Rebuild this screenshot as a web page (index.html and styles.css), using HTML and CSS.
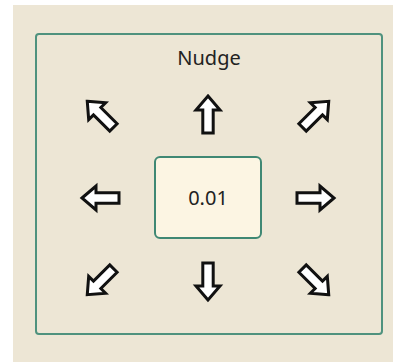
FILE: index.html
```html
<!DOCTYPE html>
<html lang="en">
<head>
  <meta charset="UTF-8" />
  <meta name="viewport" content="width=device-width, initial-scale=1.0" />
  <title>Nudge</title>
  <link rel="stylesheet" href="styles.css">
</head>
<body>
  <div class="panel">
    <div class="group">
      <div class="group-title">Nudge</div>
      <div class="pad">
        <button class="arrow rot-315" title="Up left"><svg viewBox="0 0 28 42"><polygon points="14,3 26,17 19.2,17 19.2,40 8.8,40 8.8,17 2,17"/></svg></button>
        <button class="arrow" title="Up"><svg viewBox="0 0 28 42"><polygon points="14,3 26,17 19.2,17 19.2,40 8.8,40 8.8,17 2,17"/></svg></button>
        <button class="arrow rot-45" title="Up right"><svg viewBox="0 0 28 42"><polygon points="14,3 26,17 19.2,17 19.2,40 8.8,40 8.8,17 2,17"/></svg></button>

        <button class="arrow rot-270" title="Left"><svg viewBox="0 0 28 42"><polygon points="14,3 26,17 19.2,17 19.2,40 8.8,40 8.8,17 2,17"/></svg></button>
        <div class="step">0.01</div>
        <button class="arrow rot-90" title="Right"><svg viewBox="0 0 28 42"><polygon points="14,3 26,17 19.2,17 19.2,40 8.8,40 8.8,17 2,17"/></svg></button>

        <button class="arrow rot-225" title="Down left"><svg viewBox="0 0 28 42"><polygon points="14,3 26,17 19.2,17 19.2,40 8.8,40 8.8,17 2,17"/></svg></button>
        <button class="arrow rot-180" title="Down"><svg viewBox="0 0 28 42"><polygon points="14,3 26,17 19.2,17 19.2,40 8.8,40 8.8,17 2,17"/></svg></button>
        <button class="arrow rot-135" title="Down right"><svg viewBox="0 0 28 42"><polygon points="14,3 26,17 19.2,17 19.2,40 8.8,40 8.8,17 2,17"/></svg></button>
      </div>
    </div>
  </div>
</body>
</html>
```

FILE: styles.css
```css
body {
  margin: 0;
  background-color: #fff;
  font-family: "Noto Sans", "Open Sans", sans-serif;
  color: #222;
}
.panel {
  margin: 5px 0 0 13px;
  height: 357px;
  padding: 28px 0 0 22px;
  box-sizing: border-box;
  background-color: #ede6d5;
}
.group {
  width: 348px;
  height: 302px;
  box-sizing: border-box;
  border: 2px solid #4f927e;
  border-radius: 4px;
}
.group-title {
  height: 37px;
  line-height: 46px;
  text-align: center;
  font-size: 20px;
}
.pad {
  display: grid;
  grid-template-columns: repeat(3, 108px);
  grid-template-rows: repeat(3, 84px);
  padding-left: 9px;
}
.arrow {
  display: flex;
  align-items: center;
  justify-content: center;
  background: none;
  border: none;
  padding: 0;
  cursor: pointer;
}
.arrow svg {
  width: 28px;
  height: 42px;
  overflow: visible;
}
.arrow polygon {
  fill: #fff;
  stroke: #111;
  stroke-width: 3;
  stroke-linejoin: miter;
}
.rot-45 svg { transform: rotate(45deg); }
.rot-90 svg { transform: rotate(90deg); }
.rot-135 svg { transform: rotate(135deg); }
.rot-180 svg { transform: rotate(180deg); }
.rot-225 svg { transform: rotate(225deg); }
.rot-270 svg { transform: rotate(270deg); }
.rot-315 svg { transform: rotate(315deg); }
.step {
  display: flex;
  align-items: center;
  justify-content: center;
  height: 83px;
  box-sizing: border-box;
  border: 2px solid #3f8874;
  border-radius: 6px;
  background-color: #fcf5e3;
  font-size: 20px;
}
```
